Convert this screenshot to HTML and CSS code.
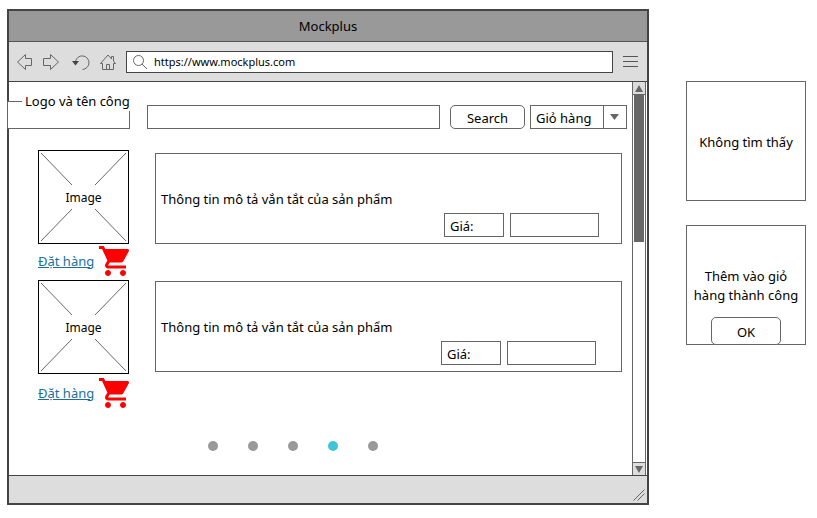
FILE: index.html
```html
<!DOCTYPE html>
<html lang="vi">
<head>
<meta charset="utf-8">
<meta name="viewport" content="width=device-width, initial-scale=1">
<title>Mockplus</title>
<link rel="stylesheet" href="styles.css">
</head>
<body>
<div class="page">
  <div class="window">
    <header class="titlebar">Mockplus</header>
    <nav class="toolbar">
      <button class="tool" type="button" aria-label="Back"><svg width="18" height="18" viewBox="0 0 18 18"><path d="M1.500 9L9.500 1.500V5.500H15.500V12.500H9.500V16.500Z"/></svg></button>
      <button class="tool" type="button" aria-label="Forward"><svg width="18" height="18" viewBox="0 0 18 18"><path d="M16.500 9L8.500 1.500V5.500H1.500V12.500H8.500V16.500Z"/></svg></button>
      <button class="tool tool-reload" type="button" aria-label="Reload"><svg width="18" height="18" viewBox="0 0 18 18"><path d="M3.500 8.500A6.800 6.800 0 1 1 10.500 16.500"/><path class="solid" d="M0 8H7L3.500 12.500Z"/></svg></button>
      <button class="tool" type="button" aria-label="Home"><svg width="18" height="18" viewBox="0 0 18 18"><path d="M1.500 10.500L9 2L12.500 6V3.500H14.500V8L16.500 10.500H14.500V16.500H3.500V10.500ZM7.500 16.500V11.500H10.500V16.500"/></svg></button>
      <div class="address">
        <svg width="16" height="16" viewBox="0 0 16 16"><circle cx="6.500" cy="6.500" r="5"/><path d="M10 10L15 15"/></svg>
        <input type="text" aria-label="Address" value="https://www.mockplus.com">
      </div>
      <button class="tool menu" type="button" aria-label="Menu"><svg width="15" height="11" viewBox="0 0 15 11"><path d="M0 .5H15M0 5.500H15M0 10.500H15"/></svg></button>
    </nav>
    <div class="body">
      <main class="content">
        <div class="search-row">
          <fieldset class="logo"><legend>Logo và tên công</legend></fieldset>
          <input class="box search" type="text" aria-label="Search">
          <button class="button" type="button">Search</button>
          <div class="dropdown">
            <select class="box" aria-label="Giỏ hàng"><option>Giỏ hàng</option></select>
            <svg class="caret" width="23" height="22" viewBox="0 0 23 22"><path d="M.5 0V22"/><path class="solid" d="M7 8H16L11.500 14Z"/></svg>
          </div>
        </div>

        <section class="product">
          <div class="side">
            <div class="picture">
              <svg viewBox="0 0 89 92" preserveAspectRatio="none"><path d="M2 2L33 34M87 2L56 34M2 90L33 58M87 90L56 58"/></svg>
              <span>Image</span>
            </div>
            <div class="order">
              <a href="#">Đặt hàng</a>
              <svg class="cart" width="30" height="30" viewBox="1 2 20 20"><path d="M7 18c-1.100 0-1.990.9-1.990 2S5.900 22 7 22s2-.9 2-2-.9-2-2-2zM1 2v2h2l3.600 7.590-1.350 2.450c-.16.280-.25.610-.25.960 0 1.100.9 2 2 2h12v-2H7.420c-.14 0-.25-.11-.25-.25l.03-.12.900-1.630h7.450c.75 0 1.410-.41 1.750-1.030l3.580-6.490c.08-.14.120-.31.120-.48 0-.55-.45-1-1-1H5.210l-.94-2H1zm16 16c-1.100 0-1.990.9-1.990 2s.890 2 1.990 2 2-.9 2-2-.9-2-2-2z"/></svg>
            </div>
          </div>
          <div class="details">
            <p>Thông tin mô tả vắn tắt của sản phẩm</p>
            <div class="price">
              <label class="box" for="price-1">Giá:</label>
              <input class="box" id="price-1" type="text">
            </div>
          </div>
        </section>

        <section class="product product-last">
          <div class="side">
            <div class="picture">
              <svg viewBox="0 0 89 92" preserveAspectRatio="none"><path d="M2 2L33 34M87 2L56 34M2 90L33 58M87 90L56 58"/></svg>
              <span>Image</span>
            </div>
            <div class="order">
              <a href="#">Đặt hàng</a>
              <svg class="cart" width="30" height="30" viewBox="1 2 20 20"><path d="M7 18c-1.100 0-1.990.9-1.990 2S5.900 22 7 22s2-.9 2-2-.9-2-2-2zM1 2v2h2l3.600 7.590-1.350 2.450c-.16.280-.25.610-.25.960 0 1.100.9 2 2 2h12v-2H7.420c-.14 0-.25-.11-.25-.25l.03-.12.900-1.630h7.450c.75 0 1.410-.41 1.750-1.030l3.580-6.490c.08-.14.120-.31.120-.48 0-.55-.45-1-1-1H5.210l-.94-2H1zm16 16c-1.100 0-1.990.9-1.990 2s.890 2 1.990 2 2-.9 2-2-.9-2-2-2z"/></svg>
            </div>
          </div>
          <div class="details">
            <p>Thông tin mô tả vắn tắt của sản phẩm</p>
            <div class="price">
              <label class="box" for="price-2">Giá:</label>
              <input class="box" id="price-2" type="text">
            </div>
          </div>
        </section>

        <div class="pager">
          <button type="button" aria-label="1"></button>
          <button type="button" aria-label="2"></button>
          <button type="button" aria-label="3"></button>
          <button class="current" type="button" aria-label="4"></button>
          <button type="button" aria-label="5"></button>
        </div>
      </main>
      <div class="scrollbar">
        <button type="button" aria-label="Scroll up"><svg width="8" height="7" viewBox="0 0 8 7"><path d="M0 7L4 0L8 7Z"/></svg></button>
        <div class="track"><div class="thumb"></div></div>
        <button class="down" type="button" aria-label="Scroll down"><svg width="8" height="7" viewBox="0 0 8 7"><path d="M0 0L4 7L8 0Z"/></svg></button>
      </div>
    </div>
    <footer class="statusbar"><svg width="12" height="12" viewBox="0 0 12 12"><path d="M.5 11.500L11.500 .5M4.500 11.500L11.500 4.500"/></svg></footer>
  </div>

  <aside class="dialogs">
    <div class="dialog"><p>Không tìm thấy</p></div>
    <div class="dialog dialog-confirm">
      <p>Thêm vào giỏ hàng thành công</p>
      <button class="button ok" type="button">OK</button>
    </div>
  </aside>
</div>
</body>
</html>
```
FILE: styles.css
```css
* { box-sizing: border-box; }

body {
  margin: 0;
  background: #fff;
  color: #000;
  font: 13px/19px "Noto Sans", "Open Sans", sans-serif;
}

p { margin: 0; }
svg { display: block; flex: none; }
button, input, select { font: inherit; color: inherit; margin: 0; }

.page {
  display: flex;
  gap: 37px;
  min-height: 100vh;
  padding: 9px 11px 13px 7px;
}

.window {
  flex: 1;
  display: flex;
  flex-direction: column;
  border: 2px solid #444;
}

.titlebar {
  height: 31px;
  line-height: 30px;
  text-align: center;
  background: #999;
  border-bottom: 1px solid #555;
}

.toolbar {
  display: flex;
  align-items: center;
  gap: 8px;
  height: 40px;
  padding: 0 9px 0 7px;
  background: #ddd;
  border-bottom: 1px solid #444;
}

.tool {
  padding: 0;
  border: 0;
  background: none;
}

.tool-reload { margin: 0 1px 0 4px; }
.menu { margin-left: 2px; }

.toolbar svg, .caret, .picture svg, .statusbar svg {
  fill: none;
  stroke: #666;
}

.menu svg { stroke: #555; }
.toolbar .solid { fill: #444; stroke: none; }
.caret .solid { fill: #666; stroke: none; }

.address {
  flex: 1;
  display: flex;
  align-items: center;
  gap: 6px;
  height: 22px;
  margin-left: 1px;
  padding-left: 5px;
  background: #fff;
  border: 1px solid #444;
}

.address input {
  flex: 1;
  min-width: 0;
  height: 18px;
  padding: 0;
  border: 0;
  outline: 0;
  background: none;
  font-size: 11px;
}

.body { flex: 1; display: flex; }

.content {
  flex: 1;
  padding-top: 10px;
}

.search-row {
  display: flex;
  align-items: flex-end;
  height: 37px;
  padding-right: 5px;
}

/* The logo group hangs over the window's left frame. */
.logo {
  width: 123px;
  min-width: 0;
  height: 37px;
  margin: 0 17px 0 -2px;
  padding: 0;
  border: 1px solid #666;
  background: #fff;
}

.logo legend {
  margin-left: 14px;
  padding: 0 0 0 3px;
  white-space: nowrap;
}

.box {
  height: 24px;
  padding: 2px 5px 0;
  border: 1px solid #666;
  border-radius: 0;
  background: #fff;
}

.search { flex: 1; min-width: 0; }

.button {
  height: 24px;
  padding: 2px 0 0;
  border: 1px solid #666;
  border-radius: 5px;
  background: #fff;
}

.search-row .button { width: 75px; margin: 0 5px 0 10px; }

.dropdown { position: relative; width: 97px; }

.dropdown select {
  display: block;
  width: 100%;
  appearance: none;
}

.caret {
  position: absolute;
  top: 1px;
  right: 1px;
  pointer-events: none;
}

.product {
  display: flex;
  gap: 26px;
  padding: 0 10px 0 29px;
  margin-top: 21px;
}

.product-last { margin-top: 4px; }

.side { width: 91px; }

.picture {
  display: grid;
  place-items: center;
  height: 94px;
  border: 1px solid #000;
  font-size: 12px;
}

.picture svg, .picture span { grid-area: 1 / 1; }
.picture svg { width: 100%; height: 92px; }

.order {
  display: flex;
  align-items: center;
  justify-content: space-between;
  padding-top: 2px;
}

.product-last .order { padding-top: 4px; }

.order a { color: #1a6f9e; white-space: nowrap; }
.cart { fill: #f00; }

.details {
  flex: 1;
  display: flex;
  align-items: center;
  justify-content: space-between;
  height: 91px;
  margin-top: 3px;
  padding: 0 22px 6px 5px;
  border: 1px solid #666;
}

.product-last .details { margin-top: 1px; padding-right: 25px; }

.details p { padding-top: 8px; }

.price {
  display: flex;
  gap: 6px;
  align-self: flex-end;
}

.price label { width: 60px; padding-top: 3px; }
.price input { width: 89px; }

.pager {
  display: flex;
  gap: 30px;
  margin: 33px 0 0 199px;
}

.pager button {
  width: 10px;
  height: 10px;
  padding: 0;
  border: 0;
  border-radius: 50%;
  background: #999;
}

.pager .current { background: #40c4d9; }

.scrollbar {
  display: flex;
  flex-direction: column;
  width: 14px;
  margin-right: 1px;
  border: solid #666;
  border-width: 0 1px;
}

.scrollbar button {
  display: grid;
  place-items: center;
  height: 13px;
  padding: 0;
  border: solid #666;
  border-width: 0 0 1px;
  background: #ddd;
}

.scrollbar .down { border-width: 1px 0 0; }
.scrollbar svg { fill: #666; }
.track { flex: 1; padding: 0 1px; }
.thumb { height: 40%; background: #666; }

.statusbar {
  display: flex;
  align-items: flex-end;
  justify-content: flex-end;
  height: 28px;
  padding: 0 2px 2px 0;
  background: #ddd;
  border-top: 1px solid #444;
}

.dialogs {
  display: flex;
  flex-direction: column;
  gap: 24px;
  width: 120px;
  padding-top: 72px;
}

.dialog {
  display: flex;
  flex-direction: column;
  align-items: center;
  justify-content: center;
  height: 120px;
  padding: 2px 4px 0;
  border: 1px solid #666;
  text-align: center;
}

.dialog-confirm { justify-content: flex-end; }
.dialog-confirm p { margin-bottom: 12px; }
.ok { width: 70px; height: 28px; margin-bottom: -1px; }
```
